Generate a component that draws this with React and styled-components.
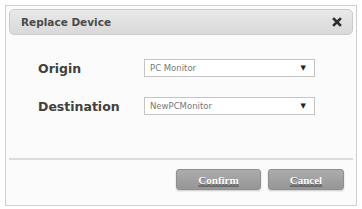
import React from 'react';
import styled, {createGlobalStyle} from 'styled-components';

const GlobalStyle = createGlobalStyle`
  html, body {
    margin: 0;
    background: #ffffff;
  }
`;

const Dialog = styled.div`
  box-sizing: border-box;
  margin: 5px 0 0 5px;
  width: 352px;
  height: 201px;
  padding: 3px;
  border: 1px solid #cfcfcf;
  background: #fbfbfb;
  display: flex;
  flex-direction: column;
  font-family: "DejaVu Sans", "Open Sans", sans-serif;
`;

const Header = styled.div`
  box-sizing: border-box;
  height: 26px;
  padding: 0 8px 0 11px;
  border: 1px solid #cccccc;
  border-radius: 5px;
  background: linear-gradient(#e9e9e9, #d9d9d9);
  display: flex;
  align-items: center;
  justify-content: space-between;
`;

const Title = styled.span`
  font-size: 10.5px;
  font-weight: bold;
  color: #4a4a4a;
`;

const CloseButton = styled.button`
  width: 14px;
  height: 14px;
  padding: 0;
  border: none;
  background: transparent;
  display: flex;
  align-items: center;
  justify-content: center;
`;

const Body = styled.div`
  flex: 1;
  padding: 24px 0 0 29px;
  display: grid;
  grid-template-columns: 106px 171px;
  grid-auto-rows: 18px;
  row-gap: 20px;
  align-items: center;
`;

const Label = styled.span`
  font-size: 12.5px;
  font-weight: bold;
  color: #404040;
`;

const Select = styled.div`
  box-sizing: border-box;
  height: 18px;
  padding: 0 8px 0 5px;
  border: 1px solid #c4c4c4;
  background: #ffffff;
  display: flex;
  align-items: center;
  justify-content: space-between;
  font-size: 8.5px;
  color: #777777;
`;

const Arrow = styled.span`
  font-size: 7px;
  color: #222;
`;

const Footer = styled.div`
  border-top: 2px solid #dcdcdc;
  padding: 9px 9px 12px 0;
  display: flex;
  justify-content: flex-end;
  gap: 7px;
`;

const Button = styled.button`
  box-sizing: border-box;
  width: ${p => p.$width}px;
  height: 21px;
  border: 1px solid #8f8f8f;
  border-radius: 3px;
  background: linear-gradient(#acacac, #969696);
  box-shadow: 0 1px 2px rgba(0, 0, 0, 0.2);
  color: #ffffff;
  font-family: "Liberation Serif", serif;
  font-weight: bold;
  font-size: 11px;
  text-shadow: 0 1px 0 #666;
  text-decoration: underline;
  text-decoration-color: #777;
`;

const rows = [
  {label: 'Origin', value: 'PC Monitor'},
  {label: 'Destination', value: 'NewPCMonitor'},
];

export default function App() {
  return (
    <>
      <GlobalStyle />
      <Dialog>
        <Header>
          <Title>Replace Device</Title>
          <CloseButton>
            <svg width="10" height="10" viewBox="0 0 10 10">
              <path d="M2 2 L8 8 M8 2 L2 8" stroke="#2e2e2e" strokeWidth="2.6" strokeLinecap="square" />
            </svg>
          </CloseButton>
        </Header>
        <Body>
          {rows.map(r => (
            <React.Fragment key={r.label}>
              <Label>{r.label}</Label>
              <Select>
                <span>{r.value}</span>
                <Arrow>▼</Arrow>
              </Select>
            </React.Fragment>
          ))}
        </Body>
        <Footer>
          <Button $width={85}>Confirm</Button>
          <Button $width={76}>Cancel</Button>
        </Footer>
      </Dialog>
    </>
  );
}
